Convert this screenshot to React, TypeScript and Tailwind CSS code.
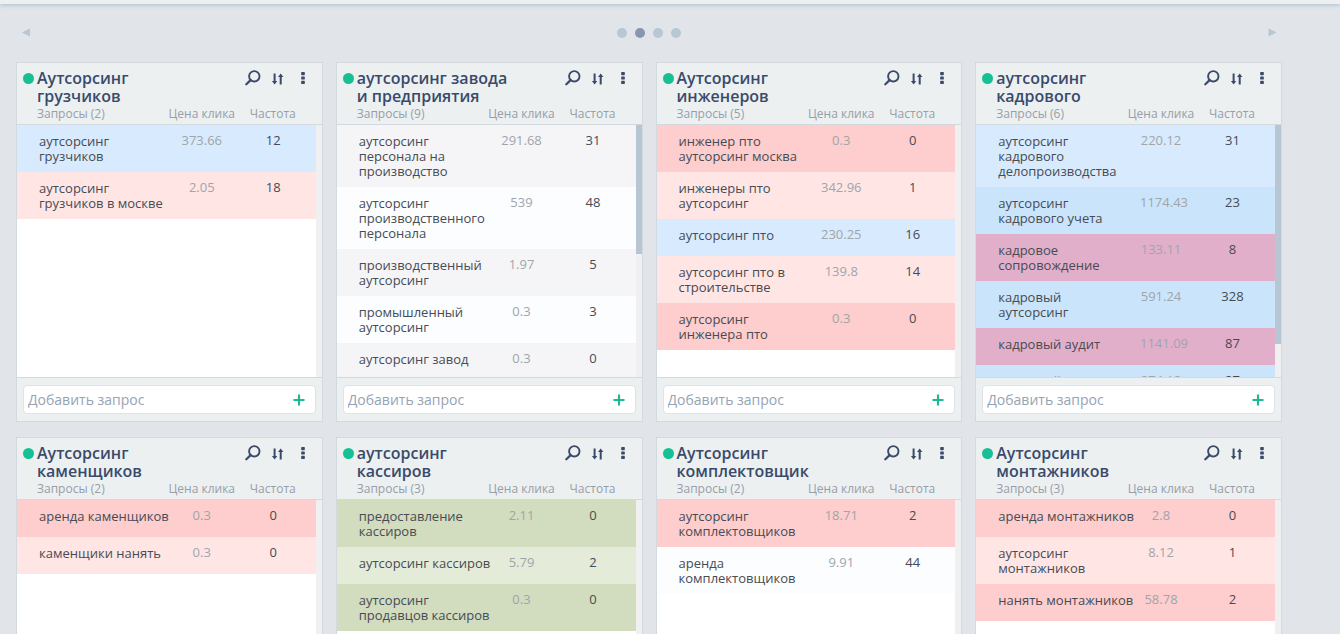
import { useState } from "react";
import clsx from "clsx";

type Tone = "blue" | "blueDark" | "pink" | "red" | "purple" | "gray" | "light" | "green" | "greenLight";

type Query = {
  name: string;
  price: string;
  freq: number;
  tone: Tone;
};

type Group = {
  id: number;
  title: string;
  total: number;
  thumb?: number; // scrollbar thumb height
  queries: Query[];
};

const tones: Record<Tone, string> = {
  blue: "bg-[#d8eafd]",
  blueDark: "bg-[#cae4fc]",
  pink: "bg-[#ffe6e5]",
  red: "bg-[#fdcecd]",
  purple: "bg-[#e2afca]",
  gray: "bg-[#f5f5f8]",
  light: "bg-[#fbfdff]",
  green: "bg-[#d2dcbf]",
  greenLight: "bg-[#e4ecd9]",
};

const groups: Group[] = [
  {
    id: 1,
    title: "Аутсорсинг грузчиков",
    total: 2,
    queries: [
      { name: "аутсорсинг\nгрузчиков", price: "373.66", freq: 12, tone: "blue" },
      { name: "аутсорсинг\nгрузчиков в москве", price: "2.05", freq: 18, tone: "pink" },
    ],
  },
  {
    id: 2,
    title: "аутсорсинг завода и предприятия",
    total: 9,
    thumb: 129,
    queries: [
      { name: "аутсорсинг\nперсонала на\nпроизводство", price: "291.68", freq: 31, tone: "gray" },
      { name: "аутсорсинг\nпроизводственного\nперсонала", price: "539", freq: 48, tone: "light" },
      { name: "производственный\nаутсорсинг", price: "1.97", freq: 5, tone: "gray" },
      { name: "промышленный\nаутсорсинг", price: "0.3", freq: 3, tone: "light" },
      { name: "аутсорсинг завод", price: "0.3", freq: 0, tone: "gray" },
    ],
  },
  {
    id: 3,
    title: "Аутсорсинг инженеров",
    total: 5,
    queries: [
      { name: "инженер пто\nаутсорсинг москва", price: "0.3", freq: 0, tone: "red" },
      { name: "инженеры пто\nаутсорсинг", price: "342.96", freq: 1, tone: "pink" },
      { name: "аутсорсинг пто", price: "230.25", freq: 16, tone: "blue" },
      { name: "аутсорсинг пто в\nстроительстве", price: "139.8", freq: 14, tone: "pink" },
      { name: "аутсорсинг\nинженера пто", price: "0.3", freq: 0, tone: "red" },
    ],
  },
  {
    id: 4,
    title: "аутсорсинг кадрового",
    total: 6,
    thumb: 219,
    queries: [
      { name: "аутсорсинг\nкадрового\nделопроизводства", price: "220.12", freq: 31, tone: "blue" },
      { name: "аутсорсинг\nкадрового учета", price: "1174.43", freq: 23, tone: "blueDark" },
      { name: "кадровое\nсопровождение", price: "133.11", freq: 8, tone: "purple" },
      { name: "кадровый\nаутсорсинг", price: "591.24", freq: 328, tone: "blueDark" },
      { name: "кадровый аудит", price: "1141.09", freq: 87, tone: "purple" },
      { name: "кадровый\nконсалтинг", price: "274.12", freq: 27, tone: "blueDark" },
    ],
  },
  {
    id: 5,
    title: "Аутсорсинг каменщиков",
    total: 2,
    queries: [
      { name: "аренда каменщиков", price: "0.3", freq: 0, tone: "red" },
      { name: "каменщики нанять", price: "0.3", freq: 0, tone: "pink" },
    ],
  },
  {
    id: 6,
    title: "аутсорсинг кассиров",
    total: 3,
    queries: [
      { name: "предоставление\nкассиров", price: "2.11", freq: 0, tone: "green" },
      { name: "аутсорсинг кассиров", price: "5.79", freq: 2, tone: "greenLight" },
      { name: "аутсорсинг\nпродавцов кассиров", price: "0.3", freq: 0, tone: "green" },
    ],
  },
  {
    id: 7,
    title: "Аутсорсинг комплектовщик",
    total: 2,
    queries: [
      { name: "аутсорсинг\nкомплектовщиков", price: "18.71", freq: 2, tone: "red" },
      { name: "аренда\nкомплектовщиков", price: "9.91", freq: 44, tone: "light" },
    ],
  },
  {
    id: 8,
    title: "Аутсорсинг монтажников",
    total: 3,
    queries: [
      { name: "аренда монтажников", price: "2.8", freq: 0, tone: "red" },
      { name: "аутсорсинг\nмонтажников", price: "8.12", freq: 1, tone: "pink" },
      { name: "нанять монтажников", price: "58.78", freq: 2, tone: "red" },
    ],
  },
];

function SearchIcon() {
  return (
    <svg width="16" height="16" viewBox="0 0 16 16" fill="none" stroke="currentColor">
      <circle cx="9.3" cy="6.3" r="5.2" strokeWidth="1.9" />
      <path d="M5.6 10.1 1.3 14.3" strokeWidth="2.2" strokeLinecap="round" />
    </svg>
  );
}

function SortIcon() {
  return (
    <svg width="14" height="14" viewBox="0 0 14 14" fill="currentColor">
      <path d="M2.600 2.500h2v7.500h1.700L3.600 13.500.900 10h1.700z" />
      <path d="M8.700 13.500V6H7L9.700 2.500 12.400 6h-1.700v7.500z" />
    </svg>
  );
}

function DotsIcon() {
  return (
    <svg width="4" height="14" viewBox="0 0 4 14" fill="currentColor">
      <rect x="0.200" y="1" width="3.600" height="3.200" rx="0.600" />
      <rect x="0.200" y="5.400" width="3.600" height="3.200" rx="0.600" />
      <rect x="0.200" y="9.800" width="3.600" height="3.200" rx="0.600" />
    </svg>
  );
}

function GroupCard({ group }: { group: Group }) {
  const [value, setValue] = useState("");

  return (
    <section className="min-w-0 border border-[#d3dadf] bg-[#ecf0f1]">
      <header className="flex items-start justify-between pt-[6px] pr-[17px] pl-[6px] text-[#3a4a6b]">
        <div className="flex gap-[3px]">
          <span className="mt-[4px] size-[11px] shrink-0 rounded-full bg-[#16c094]" />
          <h2 className="min-h-[36px] w-[156px] text-[16px] leading-[18px] font-semibold">
            {group.title}
          </h2>
        </div>
        <div className="flex items-center gap-[10px] pt-px">
          <button type="button" aria-label="Поиск">
            <SearchIcon />
          </button>
          <button type="button" aria-label="Сортировка">
            <SortIcon />
          </button>
          <button type="button" aria-label="Меню" className="ml-[6px]">
            <DotsIcon />
          </button>
        </div>
      </header>

      <table className="relative block">
        <thead className="block h-5 border-b border-[#d3dadf] text-[12px] leading-[18px] text-[#979ea8]">
          <tr className="flex pr-[6px] pl-[20px]">
            <th className="flex-1 text-left font-normal">Запросы ({group.total})</th>
            <th className="w-[80px] text-center font-normal whitespace-nowrap">Цена клика</th>
            <th className="w-[74px] pr-[12px] text-center font-normal">Частота</th>
          </tr>
        </thead>
        <tbody className="block h-[252px] overflow-hidden bg-white">
          {group.queries.map((q) => (
            <tr
              key={q.name}
              className={clsx("flex min-h-[37px] pt-[9px] pr-[6px] pb-2 pl-[22px] text-[13px] leading-[15px] text-[#474b54]", tones[q.tone])}
            >
              <td className="min-w-0 flex-1 whitespace-pre-line">{q.name}</td>
              <td className="-mt-px w-[42px] text-center whitespace-nowrap text-[#a0a5aa]">{q.price}</td>
              <td className="-mt-px w-[93px] pl-2 text-center">{q.freq}</td>
            </tr>
          ))}
        </tbody>
        {/* Scrollbar */}
        <tfoot aria-hidden="true" className="absolute right-0 bottom-0 block h-[252px] w-[6px] bg-[#f0f0f1]">
          {group.thumb && (
            <tr className="block bg-[#b7c6d3]" style={{ height: group.thumb }} />
          )}
        </tfoot>
      </table>

      <form
        className="border-t border-[#d3dadf] px-[6px] py-[7px]"
        onSubmit={(e) => {
          e.preventDefault();
          setValue("");
        }}
      >
        <div className="flex h-[29px] items-center rounded-[4px] border border-[#dde3e7] bg-white pr-[10px] pl-[4px]">
          <input
            type="text"
            aria-label="Добавить запрос"
            placeholder="Добавить запрос"
            value={value}
            onChange={(e) => setValue(e.target.value)}
            className="min-w-0 flex-1 text-[14px] leading-[20px] text-[#4b4f58] outline-none placeholder:text-[#96a3b3]"
          />
          <button type="submit" aria-label="Добавить" className="text-[#1fb895]">
            <svg width="12" height="12" viewBox="0 0 12 12" stroke="currentColor" strokeWidth="2.2">
              <path d="M6 .5v11M.5 6h11" />
            </svg>
          </button>
        </div>
      </form>
    </section>
  );
}

export default function App() {
  const [page, setPage] = useState(1);

  return (
    <div className="h-screen overflow-hidden bg-[#e1e5ea] font-['Open_Sans',sans-serif]">
      <div className="h-1 bg-[#ecf0f0] shadow-[0_1px_4px_#a9bccb]" />

      <main className="pr-[58px] pl-4">
        {/* Pager */}
        <nav className="flex h-[58px] items-center justify-between px-[5px] text-[#b7c7d3]">
          <button type="button" aria-label="Назад" onClick={() => setPage(Math.max(0, page - 1))}>
            <svg width="10" height="10" viewBox="0 0 10 10" fill="currentColor">
              <path d="M9 .5v8L.800 4.500z" />
            </svg>
          </button>
          <div className="flex gap-2">
            {[0, 1, 2, 3].map((i) => (
              <button
                key={i}
                type="button"
                aria-label={`Страница ${i + 1}`}
                onClick={() => setPage(i)}
                className={clsx("size-[10px] rounded-full", i === page ? "bg-[#8797ad]" : "bg-[#b7c7d3]")}
              />
            ))}
          </div>
          <button type="button" aria-label="Вперёд" onClick={() => setPage(Math.min(3, page + 1))}>
            <svg width="10" height="10" viewBox="0 0 10 10" fill="currentColor">
              <path d="M1.500 .5v8L9.700 4.500z" />
            </svg>
          </button>
        </nav>

        <div className="grid grid-cols-4 gap-x-[13px] gap-y-[15px]">
          {groups.map((group) => (
            <GroupCard key={group.id} group={group} />
          ))}
        </div>
      </main>
    </div>
  );
}
